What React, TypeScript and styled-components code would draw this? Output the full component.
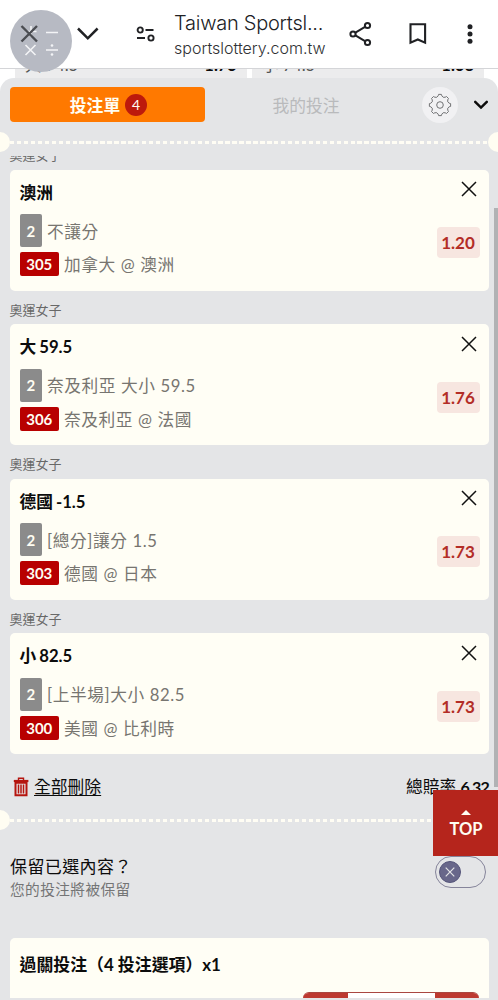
import React from 'react';
import styled, { createGlobalStyle, css } from 'styled-components';

const Global = createGlobalStyle`
  * { box-sizing: border-box; }
  body { margin: 0; background: #fff; }
  button { border: 0; padding: 0; margin: 0; background: none; font: inherit; color: inherit; }
  svg { display: block; flex: none; }
`;

const Screen = styled.div`
  position: relative;
  width: 498px;
  height: 1000px;
  overflow: hidden;
  display: flex;
  flex-direction: column;
  background: #fff;
  font-family: Lato, 'Noto Sans CJK TC', sans-serif;
  color: #0c0c0c;
  white-space: nowrap;
`;

const BrowserBar = styled.header`
  flex: none;
  height: 69px;
  border-bottom: 1px solid #d4d5d8;
  display: flex;
  align-items: center;
  padding: 0 21px 0 77px;
  color: #202124;
`;

const PageAddress = styled.div`
  width: 157px;
  margin-left: 18px;
  padding-top: 4px;
  font-family: Inter, sans-serif;
  font-weight: 300;
`;

const PageTitle = styled.div`
  font-size: 20px;
  line-height: 25px;
  letter-spacing: -0.25px;
`;

const PageHost = styled.div`
  font-size: 16px;
  line-height: 25px;
  letter-spacing: 0;
  color: #303134;
`;

const BarIcon = styled.span<{ $left: number }>`
  margin-left: ${(p) => p.$left}px;
`;

const FloatingBubble = styled.div`
  position: absolute;
  left: 10px;
  top: 10px;
  z-index: 3;
`;

const OddsStrip = styled.div`
  flex: none;
  height: 20px;
  margin-bottom: -11px;
  padding: 0 14px 0 15px;
  display: grid;
  grid-template-columns: 232px 232px;
  gap: 5px;
  overflow: hidden;
`;

const OddsCell = styled.div`
  height: 20px;
  overflow: hidden;
  background: #ececed;
  padding: 0 10px;
  display: flex;
  justify-content: space-between;
  font-size: 16.5px;
  line-height: 22px;
  color: #555;
  & > * { margin-top: -15px; }
  b { color: #0c0c0c; }
`;

const Slip = styled.main`
  position: relative;
  flex: 1;
  min-height: 0;
  display: flex;
  flex-direction: column;
  background: #e4e5e7;
  border-radius: 14px 14px 0 0;
  overflow: hidden;
`;

const TabBar = styled.nav`
  flex: none;
  height: 54px;
  padding: 0 9.5px 1px 9.5px;
  display: flex;
  align-items: center;
`;

const Tab = styled.button<{ $active?: boolean }>`
  width: 195px;
  height: 35px;
  border-radius: 4px;
  display: flex;
  align-items: center;
  justify-content: center;
  gap: 5px;
  font-size: 16.8px;
  color: #b9babc;
  padding-left: 8px;
  ${(p) => p.$active && css`
    padding-left: 3px;
    background: #ff7900;
    color: #fffdf2;
    font-weight: 700;
  `}
`;

const CountBadge = styled.span`
  width: 22px;
  height: 22px;
  border-radius: 50%;
  background: #bd1a0c;
  font-size: 14px;
  font-weight: 400;
  line-height: 21px;
  text-align: center;
`;

const GearButton = styled.button`
  width: 36px;
  height: 36px;
  margin: 0 15px 0 auto;
  border-radius: 50%;
  background: #f1f1f3;
  display: grid;
  place-items: center;
`;

const Tear = styled.div`
  flex: none;
  height: 20px;
  margin: 0 -10px;
  display: flex;
  align-items: center;
  justify-content: space-between;
  &::before, &::after {
    content: '';
    width: 20px;
    height: 20px;
    border-radius: 50%;
    background: #fffdf2;
  }
`;

const TearDashes = styled.span`
  flex: 1;
  height: 3px;
  background: repeating-linear-gradient(90deg, #fffdf4 0 4.4px, transparent 4.4px 6.95px);
`;

const BetList = styled.section`
  flex: none;
  margin-top: 4px;
  height: 598px;
  padding: 0 9px 0 9.5px;
  overflow: hidden;
`;

const BetGroup = styled.article`
  &:first-child { margin-top: -20px; }
`;

const League = styled.h3`
  margin: 0;
  height: 33.5px;
  font-size: 13px;
  font-weight: 400;
  line-height: 39px;
  color: #686868;
`;

const Card = styled.div`
  height: 121px;
  padding: 0 10px;
  border-radius: 5px;
  background: #fffef5;
  display: flex;
  justify-content: space-between;
`;

const BetInfo = styled.div`
  display: flex;
  flex-direction: column;
`;

const Pick = styled.h2`
  margin: 0;
  height: 44.5px;
  font-size: 16.7px;
  line-height: 47px;
  font-weight: 700;
  word-spacing: -1px;
`;

const Line = styled.div<{ $height: number }>`
  height: ${(p) => p.$height}px;
  margin-bottom: 5px;
  display: flex;
  align-items: center;
  gap: 5px;
  font-size: 16.7px;
  letter-spacing: 0.6px;
  color: #777570;
`;

const Tag = styled.span<{ $red?: boolean }>`
  align-self: stretch;
  width: ${(p) => (p.$red ? 39.5 : 22.5)}px;
  border-radius: 2px;
  background: ${(p) => (p.$red ? '#b80000' : '#8b8b8b')};
  color: #fffdf2;
  font-size: 15px;
  font-weight: 700;
  letter-spacing: 0;
  display: grid;
  place-items: center;
`;

const BetSide = styled.div`
  display: flex;
  flex-direction: column;
  align-items: flex-end;
  margin-right: -0.5px;
`;

const RemoveButton = styled.button`
  height: 57.5px;
  padding: 11.5px 2.5px 0 0;
  display: flex;
`;

const Odds = styled.span`
  width: 43px;
  height: 31px;
  border-radius: 4px;
  background: #f7e6e0;
  color: #b32d26;
  font-size: 17px;
  font-weight: 700;
  line-height: 31px;
  text-align: center;
`;

const Summary = styled.div`
  flex: none;
  height: 56px;
  padding: 10px 9px 0 13px;
  display: flex;
  align-items: flex-start;
  justify-content: space-between;
  font-size: 16.8px;
  line-height: 46px;
`;

const DeleteAll = styled.button`
  display: flex;
  align-items: center;
  gap: 5px;
  span { text-decoration: underline; text-underline-offset: 2px; text-decoration-thickness: 1px; }
`;

const TotalOdds = styled.div`
  b { font-size: 16px; font-weight: 700; letter-spacing: -0.8px; }
`;

const KeepRow = styled.div`
  flex: none;
  height: 107.5px;
  padding: 25px 12.5px 0 10px;
  display: flex;
  justify-content: space-between;
`;

const KeepTitle = styled.div`
  font-size: 17px;
  line-height: 24px;
  letter-spacing: 0.4px;
`;

const KeepHint = styled.div`
  font-size: 14.7px;
  line-height: 20px;
  letter-spacing: 0.4px;
  color: #747576;
`;

const Toggle = styled.button`
  width: 51px;
  height: 32px;
  margin-top: 0.5px;
  border: 1px solid #85849a;
  border-radius: 16px;
  padding: 0 3.5px;
  display: flex;
  align-items: center;
`;

const Knob = styled.span`
  width: 22px;
  height: 22px;
  border-radius: 50%;
  background: #68678a;
  border: 1px solid #55557a;
  display: grid;
  place-items: center;
`;

const ParlayCard = styled.section`
  flex: none;
  height: 60.5px;
  margin: 0 9px 0 9.5px;
  padding: 0 10px;
  border-radius: 5px 5px 0 0;
  background: #fffef5;
  overflow: hidden;
`;

const ParlayTitle = styled.h2`
  margin: 0;
  height: 54.5px;
  font-size: 16.9px;
  line-height: 54px;
  font-weight: 700;
`;

const Stepper = styled.div`
  width: 176px;
  height: 36px;
  margin-left: auto;
  border-radius: 6px;
  border-top: 1px solid #a94640;
  overflow: hidden;
  display: grid;
  grid-template-columns: 45px 1fr 44px;
  background: #fff;
`;

const StepButton = styled.button`
  background: #bd3930;
`;

const ScrollThumb = styled.div`
  position: absolute;
  right: 0;
  top: 208px;
  width: 4px;
  height: 579px;
  background: #b1b2b4;
`;

const TopButton = styled.button`
  position: absolute;
  right: 0;
  top: 790px;
  width: 65px;
  height: 66px;
  background: #b5251c;
  color: #fffdf2;
  display: flex;
  flex-direction: column;
  align-items: center;
  padding: 20px 0 0 1px;
  font-size: 16.5px;
  font-weight: 700;
  line-height: 28px;
`;

const bets = [
  { pick: '澳洲', market: '不讓分', code: '305', match: '加拿大 @ 澳洲', odds: '1.20' },
  { pick: '大 59.5', market: '奈及利亞 大小 59.5', code: '306', match: '奈及利亞 @ 法國', odds: '1.76' },
  { pick: '德國 -1.5', market: '[總分]讓分 1.5', code: '303', match: '德國 @ 日本', odds: '1.73' },
  { pick: '小 82.5', market: '[上半場]大小 82.5', code: '300', match: '美國 @ 比利時', odds: '1.73' },
];

// Eight short flat-topped teeth joined by scooped valleys.
const gearPath = (() => {
  const at = (a: number, r: number) =>
    `${(12 + r * Math.sin(a)).toFixed(2)} ${(12 - r * Math.cos(a)).toFixed(2)}`;
  const step = Math.PI / 4;
  let d = '';
  for (let i = 0; i < 8; i++) {
    const a = i * step;
    d += `${i ? 'L' : 'M'}${at(a - 0.13, 10.7)}L${at(a + 0.13, 10.7)}L${at(a + 0.2, 9.3)}`;
    d += `Q${at(a + step / 2, 7.6)} ${at(a + step - 0.2, 9.3)}`;
  }
  return `${d}Z`;
})();

export default function App() {
  return (
    <>
      <Global />
      <Screen>
        <BrowserBar>
          <svg width="22" height="14" viewBox="0 0 22 14" fill="none" stroke="currentColor" strokeWidth="2.5">
            <path d="M1 1.5l9.8 9.8 9.8-9.8" />
          </svg>
          <BarIcon $left={37}>
            <svg width="20" height="16" viewBox="0 0 20 16" fill="none" stroke="currentColor" strokeWidth="1.9">
              <circle cx="4.2" cy="4" r="2.6" />
              <path d="M9.5 4H17.5M1 12h8" />
              <circle cx="15" cy="12" r="2.6" />
            </svg>
          </BarIcon>
          <PageAddress>
            <PageTitle>Taiwan Sportsl...</PageTitle>
            <PageHost>sportslottery.com.tw</PageHost>
          </PageAddress>
          <BarIcon $left={18}>
            <svg width="24" height="26" viewBox="0 0 24 26" fill="none" stroke="currentColor" strokeWidth="2">
              <path d="M6 11.8l10-6M6 14.2l10 6" />
              <circle cx="4" cy="13" r="2.6" />
              <circle cx="18.5" cy="4.5" r="2.6" />
              <circle cx="18.5" cy="21.5" r="2.6" />
            </svg>
          </BarIcon>
          <BarIcon $left={36}>
            <svg width="18" height="22" viewBox="0 0 18 22" fill="none" stroke="currentColor" strokeWidth="2.1">
              <path d="M1.5 1.2h14.6v18.4L8.8 16.5l-7.3 3.1z" />
            </svg>
          </BarIcon>
          <BarIcon $left={40}>
            <svg width="6" height="20" viewBox="0 0 6 20" fill="currentColor">
              <circle cx="3" cy="2.8" r="2.5" />
              <circle cx="3" cy="10" r="2.5" />
              <circle cx="3" cy="17.2" r="2.5" />
            </svg>
          </BarIcon>
        </BrowserBar>

        <OddsStrip>
          <OddsCell><span>大 74.5</span><b>1.75</b></OddsCell>
          <OddsCell><span>小 74.5</span><b>1.68</b></OddsCell>
        </OddsStrip>

        <Slip>
          <TabBar>
            <Tab $active>投注單<CountBadge>4</CountBadge></Tab>
            <Tab>我的投注</Tab>
            <GearButton>
              <svg width="24" height="24" viewBox="0 0 24 24" fill="none" stroke="#707173" strokeWidth="1" strokeLinejoin="round">
                <path d={gearPath} />
                <circle cx="12" cy="12" r="3.3" />
              </svg>
            </GearButton>
            <svg width="16" height="10" viewBox="0 0 16 10" fill="none" stroke="#0c0c0c" strokeWidth="2.5" strokeLinecap="round">
              <path d="M2.2 1.8L8 7.6l5.800-5.800" />
            </svg>
          </TabBar>
          <Tear><TearDashes /></Tear>
          <BetList>
            {bets.map((bet) => (
              <BetGroup key={bet.code}>
                <League>奧運女子</League>
                <Card>
                  <BetInfo>
                    <Pick>{bet.pick}</Pick>
                    <Line $height={33}><Tag>2</Tag>{bet.market}</Line>
                    <Line $height={24}><Tag $red>{bet.code}</Tag>{bet.match}</Line>
                  </BetInfo>
                  <BetSide>
                    <RemoveButton>
                      <svg width="16" height="16" viewBox="0 0 16 16" fill="none" stroke="#111" strokeWidth="1.5">
                        <path d="M1 1l14 14M15 1L1 15" />
                      </svg>
                    </RemoveButton>
                    <Odds>{bet.odds}</Odds>
                  </BetSide>
                </Card>
              </BetGroup>
            ))}
          </BetList>
          <Summary>
            <DeleteAll>
              <svg width="16" height="20" viewBox="0 0 16 20" fill="none" stroke="#b5150f">
                <path d="M5.5 3V1.3h5V3" strokeWidth="1.4" />
                <path d="M.8 4h14.6" strokeWidth="2.2" />
                <path d="M2.5 5.8h11v12.400h-11z" strokeWidth="2" />
                <path d="M5.5 7.5v9M8 7.5v9M10.5 7.5v9" strokeWidth="1.5" />
              </svg>
              <span>全部刪除</span>
            </DeleteAll>
            <TotalOdds>總賠率 <b>6.32</b></TotalOdds>
          </Summary>
          <Tear><TearDashes /></Tear>
          <KeepRow>
            <div>
              <KeepTitle>保留已選內容？</KeepTitle>
              <KeepHint>您的投注將被保留</KeepHint>
            </div>
            <Toggle>
              <Knob>
                <svg width="10" height="10" viewBox="0 0 10 10" stroke="#e4e5e7" strokeWidth="1.2">
                  <path d="M.7.7l8.6 8.6M9.3.7L.7 9.3" />
                </svg>
              </Knob>
            </Toggle>
          </KeepRow>
          <ParlayCard>
            <ParlayTitle>過關投注（4 投注選項）x1</ParlayTitle>
            <Stepper><StepButton /><span /><StepButton /></Stepper>
          </ParlayCard>
        </Slip>

        <ScrollThumb />
        <TopButton>
          <svg width="10" height="5" viewBox="0 0 10 5" fill="currentColor"><path d="M0 5l5-5 5 5z" /></svg>
          TOP
        </TopButton>
        <FloatingBubble>
          <svg width="62" height="62" viewBox="0 0 62 62" fill="none">
            <circle cx="31" cy="31" r="31" fill="#b7bac3" />
            <path d="M21 16v11M15.5 21.5h11M36 22.5h12M15.5 35l10 10M25.5 35l-10 10M36 40h12" stroke="#f3f4f6" strokeWidth="1.6" />
            <circle cx="42" cy="35.5" r="1.3" fill="#f3f4f6" />
            <circle cx="42" cy="44.5" r="1.3" fill="#f3f4f6" />
            <path d="M11.5 16l15.5 15.5M27 16L11.5 31.5" stroke="#4b4d52" strokeWidth="2.4" />
          </svg>
        </FloatingBubble>
      </Screen>
    </>
  );
}
